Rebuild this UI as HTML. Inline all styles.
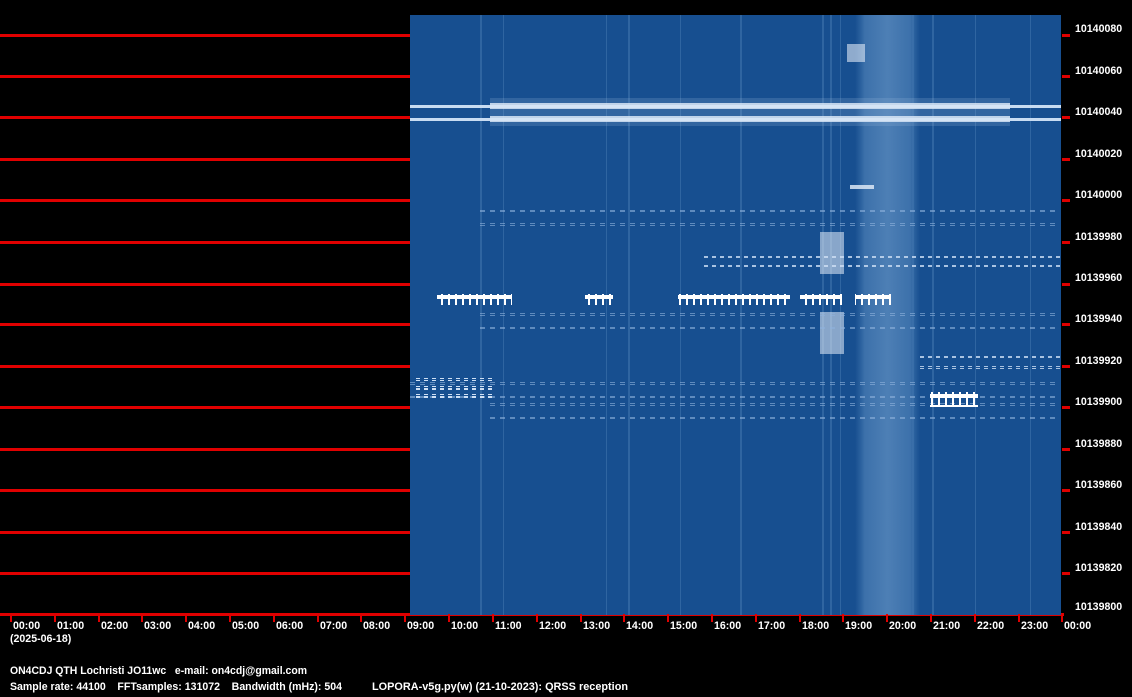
<!DOCTYPE html>
<html><head><meta charset="utf-8"><style>
html,body{margin:0;padding:0;background:#000;width:1132px;height:697px;overflow:hidden}
svg{display:block}
text{font-family:"Liberation Sans",Arial,sans-serif;font-weight:bold;font-size:10.6px;fill:#fff;white-space:pre}
</style></head><body>
<svg width="1132" height="697" viewBox="0 0 1132 697" xmlns="http://www.w3.org/2000/svg" xml:space="preserve">
<defs>
<linearGradient id="band" x1="0" x2="1" y1="0" y2="0">
<stop offset="0" stop-color="#5a8cc0" stop-opacity="0"/>
<stop offset="0.15" stop-color="#6a9acb" stop-opacity="0.45"/>
<stop offset="0.5" stop-color="#7aa7d4" stop-opacity="0.55"/>
<stop offset="0.85" stop-color="#6a9acb" stop-opacity="0.45"/>
<stop offset="1" stop-color="#5a8cc0" stop-opacity="0"/>
</linearGradient>
<pattern id="dash" width="8" height="4" patternUnits="userSpaceOnUse"><rect width="4" height="3" fill="#cfe0f5"/></pattern>
<pattern id="dashw" width="7" height="11" patternUnits="userSpaceOnUse"><rect width="2" height="11" fill="#fff"/><rect width="7" height="2" fill="#fff"/><rect y="9" width="7" height="2" fill="#fff"/></pattern>
<pattern id="faint" width="10" height="3" patternUnits="userSpaceOnUse"><rect width="5" height="2" fill="#8fb2dc" opacity="0.6"/></pattern>
</defs>
<rect width="1132" height="697" fill="#000"/>
<g fill="#e00000">
<rect x="0" y="34" width="410" height="3"/><rect x="0" y="75" width="410" height="3"/>
<rect x="0" y="116" width="410" height="3"/><rect x="0" y="158" width="410" height="3"/>
<rect x="0" y="199" width="410" height="3"/><rect x="0" y="241" width="410" height="3"/>
<rect x="0" y="283" width="410" height="3"/><rect x="0" y="323" width="410" height="3"/>
<rect x="0" y="365" width="410" height="3"/><rect x="0" y="406" width="410" height="3"/>
<rect x="0" y="448" width="410" height="3"/><rect x="0" y="489" width="410" height="3"/>
<rect x="0" y="531" width="410" height="3"/><rect x="0" y="572" width="410" height="3"/>
<rect x="0" y="613" width="1064" height="3"/>
<rect x="1062" y="34" width="8" height="3"/><rect x="1062" y="75" width="8" height="3"/>
<rect x="1062" y="116" width="8" height="3"/><rect x="1062" y="158" width="8" height="3"/>
<rect x="1062" y="199" width="8" height="3"/><rect x="1062" y="241" width="8" height="3"/>
<rect x="1062" y="283" width="8" height="3"/><rect x="1062" y="323" width="8" height="3"/>
<rect x="1062" y="365" width="8" height="3"/><rect x="1062" y="406" width="8" height="3"/>
<rect x="1062" y="448" width="8" height="3"/><rect x="1062" y="489" width="8" height="3"/>
<rect x="1062" y="531" width="8" height="3"/><rect x="1062" y="572" width="8" height="3"/>
</g>
<rect x="410" y="15" width="651" height="600" fill="#174f90"/>
<rect x="855" y="15" width="65" height="600" fill="url(#band)"/>
<g fill="#3f74ad" opacity="0.6">
<rect x="480" y="15" width="2" height="600"/><rect x="503" y="15" width="1" height="600"/>
<rect x="606" y="15" width="1" height="600"/><rect x="628" y="15" width="2" height="600"/>
<rect x="680" y="15" width="1" height="600"/><rect x="740" y="15" width="2" height="600"/>
<rect x="822" y="15" width="2" height="600"/><rect x="830" y="15" width="2" height="600"/>
<rect x="840" y="15" width="1" height="600"/><rect x="932" y="15" width="2" height="600"/>
<rect x="975" y="15" width="1" height="600"/><rect x="1030" y="15" width="1" height="600"/>
<rect x="905" y="15" width="3" height="600"/><rect x="912" y="15" width="2" height="600"/>
</g>
<rect x="410" y="105" width="651" height="3" fill="#c8dcf2"/>
<rect x="410" y="118" width="651" height="3" fill="#c8dcf2"/>
<rect x="490" y="103" width="520" height="6" fill="#e8f1fb" opacity="0.85"/>
<rect x="490" y="116" width="520" height="6" fill="#e8f1fb" opacity="0.85"/>
<rect x="490" y="98" width="520" height="28" fill="#9fc0e3" opacity="0.2"/>
<rect x="847" y="44" width="18" height="18" fill="#dfeaf7" opacity="0.6"/>
<rect x="850" y="185" width="24" height="4" fill="#e6effa" opacity="0.8"/>
<rect x="820" y="232" width="24" height="42" fill="#e6effa" opacity="0.55"/>
<rect x="820" y="312" width="24" height="42" fill="#e6effa" opacity="0.55"/>
<rect x="480" y="210" width="580" height="3" fill="url(#faint)"/>
<rect x="480" y="223" width="580" height="3" fill="url(#faint)"/>
<rect x="480" y="313" width="580" height="3" fill="url(#faint)"/>
<rect x="480" y="326" width="580" height="3" fill="url(#faint)"/>
<rect x="700" y="255" width="360" height="3" fill="url(#dash)" opacity="0.8"/>
<rect x="700" y="265" width="360" height="3" fill="url(#dash)" opacity="0.8"/>
<rect x="920" y="355" width="140" height="3" fill="url(#dash)" opacity="0.8"/>
<rect x="920" y="366" width="140" height="3" fill="url(#dash)" opacity="0.8"/>
<rect x="410" y="382" width="650" height="3" fill="url(#faint)"/>
<rect x="410" y="395" width="650" height="3" fill="url(#faint)"/>
<rect x="412" y="378" width="80" height="3" fill="url(#dash)"/>
<rect x="412" y="386" width="80" height="4" fill="url(#dash)"/>
<rect x="412" y="394" width="80" height="4" fill="url(#dash)"/>
<rect x="490" y="403" width="570" height="3" fill="url(#faint)"/>
<rect x="490" y="416" width="570" height="3" fill="url(#faint)"/>
<rect x="437" y="294" width="75" height="11" fill="url(#dashw)"/>
<rect x="585" y="294" width="28" height="11" fill="url(#dashw)"/>
<rect x="678" y="294" width="112" height="11" fill="url(#dashw)"/>
<rect x="800" y="294" width="42" height="11" fill="url(#dashw)"/>
<rect x="855" y="294" width="36" height="11" fill="url(#dashw)"/>
<rect x="930" y="392" width="48" height="15" fill="url(#dashw)"/>
<g fill="#e00000">
<rect x="10" y="614" width="2" height="8"/><rect x="54" y="614" width="2" height="8"/>
<rect x="98" y="614" width="2" height="8"/><rect x="141" y="614" width="2" height="8"/>
<rect x="185" y="614" width="2" height="8"/><rect x="229" y="614" width="2" height="8"/>
<rect x="273" y="614" width="2" height="8"/><rect x="317" y="614" width="2" height="8"/>
<rect x="360" y="614" width="2" height="8"/><rect x="404" y="614" width="2" height="8"/>
<rect x="448" y="614" width="2" height="8"/><rect x="492" y="614" width="2" height="8"/>
<rect x="536" y="614" width="2" height="8"/><rect x="580" y="614" width="2" height="8"/>
<rect x="623" y="614" width="2" height="8"/><rect x="667" y="614" width="2" height="8"/>
<rect x="711" y="614" width="2" height="8"/><rect x="755" y="614" width="2" height="8"/>
<rect x="799" y="614" width="2" height="8"/><rect x="842" y="614" width="2" height="8"/>
<rect x="886" y="614" width="2" height="8"/><rect x="930" y="614" width="2" height="8"/>
<rect x="974" y="614" width="2" height="8"/><rect x="1018" y="614" width="2" height="8"/>
<rect x="1061" y="614" width="2" height="8"/>
</g>
<g>
<text x="1075" y="32">10140080</text><text x="1075" y="74">10140060</text>
<text x="1075" y="115">10140040</text><text x="1075" y="157">10140020</text>
<text x="1075" y="198">10140000</text><text x="1075" y="240">10139980</text>
<text x="1075" y="281">10139960</text><text x="1075" y="322">10139940</text>
<text x="1075" y="364">10139920</text><text x="1075" y="405">10139900</text>
<text x="1075" y="447">10139880</text><text x="1075" y="488">10139860</text>
<text x="1075" y="530">10139840</text><text x="1075" y="571">10139820</text>
<text x="1075" y="610">10139800</text>
</g>
<g>
<text x="13" y="629">00:00</text><text x="57" y="629">01:00</text><text x="101" y="629">02:00</text>
<text x="144" y="629">03:00</text><text x="188" y="629">04:00</text><text x="232" y="629">05:00</text>
<text x="276" y="629">06:00</text><text x="320" y="629">07:00</text><text x="363" y="629">08:00</text>
<text x="407" y="629">09:00</text><text x="451" y="629">10:00</text><text x="495" y="629">11:00</text>
<text x="539" y="629">12:00</text><text x="583" y="629">13:00</text><text x="626" y="629">14:00</text>
<text x="670" y="629">15:00</text><text x="714" y="629">16:00</text><text x="758" y="629">17:00</text>
<text x="802" y="629">18:00</text><text x="845" y="629">19:00</text><text x="889" y="629">20:00</text>
<text x="933" y="629">21:00</text><text x="977" y="629">22:00</text><text x="1021" y="629">23:00</text>
<text x="1064" y="629">00:00</text>
<text x="10" y="642">(2025-06-18)</text>
<text x="10" y="674" textLength="297" lengthAdjust="spacingAndGlyphs">ON4CDJ QTH Lochristi JO11wc   e-mail: on4cdj@gmail.com</text>
<text x="10" y="690" textLength="332" lengthAdjust="spacingAndGlyphs">Sample rate: 44100    FFTsamples: 131072    Bandwidth (mHz): 504</text>
<text x="372" y="690" textLength="256" lengthAdjust="spacingAndGlyphs">LOPORA-v5g.py(w) (21-10-2023): QRSS reception</text>
</g>
</svg>
</body></html>
